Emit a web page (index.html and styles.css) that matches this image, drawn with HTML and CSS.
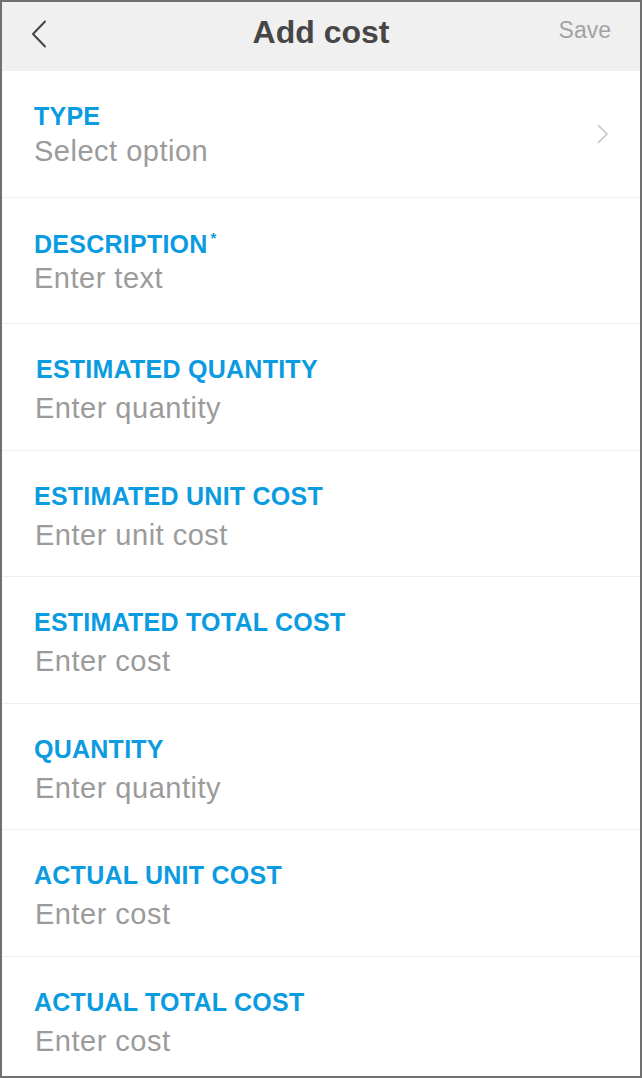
FILE: index.html
```html
<!DOCTYPE html>
<html lang="en">
<head>
<meta charset="utf-8">
<title>Add cost</title>
<link rel="stylesheet" href="styles.css">
</head>
<body>
<div class="screen">
  <header class="topbar">
    <div class="topbar-left">
      <svg class="back-icon" width="16" height="28" viewBox="0 0 16 28" aria-hidden="true">
        <polyline points="14,1.5 2,14 14,26.5" fill="none" stroke="#444" stroke-width="2" stroke-linecap="round" stroke-linejoin="round"/>
      </svg>
    </div>
    <h1 class="topbar-title">Add cost</h1>
    <div class="topbar-right"><span class="save">Save</span></div>
  </header>

  <div class="form">
    <div class="field field--select">
      <div class="field-body">
        <div class="field-label">TYPE</div>
        <div class="field-value">Select option</div>
      </div>
      <svg class="chevron" width="12" height="20" viewBox="0 0 12 20" aria-hidden="true">
        <polyline points="1.5,1.5 10,10 1.5,18.5" fill="none" stroke="#c4c4c4" stroke-width="1.6" stroke-linecap="round" stroke-linejoin="round"/>
      </svg>
    </div>
    <div class="field field--desc">
      <div class="field-body">
        <div class="field-label">DESCRIPTION<span class="required">*</span></div>
        <div class="field-value">Enter text</div>
      </div>
    </div>
    <div class="field field--wide">
      <div class="field-body">
        <div class="field-label field-label--inset">ESTIMATED QUANTITY</div>
        <div class="field-value">Enter quantity</div>
      </div>
    </div>
    <div class="field field--wide">
      <div class="field-body">
        <div class="field-label">ESTIMATED UNIT COST</div>
        <div class="field-value">Enter unit cost</div>
      </div>
    </div>
    <div class="field field--wide">
      <div class="field-body">
        <div class="field-label">ESTIMATED TOTAL COST</div>
        <div class="field-value">Enter cost</div>
      </div>
    </div>
    <div class="field field--wide">
      <div class="field-body">
        <div class="field-label">QUANTITY</div>
        <div class="field-value">Enter quantity</div>
      </div>
    </div>
    <div class="field field--wide">
      <div class="field-body">
        <div class="field-label">ACTUAL UNIT COST</div>
        <div class="field-value">Enter cost</div>
      </div>
    </div>
    <div class="field field--wide field--last">
      <div class="field-body">
        <div class="field-label">ACTUAL TOTAL COST</div>
        <div class="field-value">Enter cost</div>
      </div>
    </div>
  </div>
</div>
</body>
</html>
```

FILE: styles.css
```css
* {
  box-sizing: border-box;
}

html, body {
  margin: 0;
  padding: 0;
  background: #ffffff;
}

body {
  font-family: "Liberation Sans", Arial, Helvetica, sans-serif;
}

.screen {
  width: 642px;
  height: 1078px;
  border: 2px solid #707070;
  background: #ffffff;
  overflow: hidden;
  display: flex;
  flex-direction: column;
}

.topbar {
  height: 69px;
  flex: none;
  background: #f0f0f0;
  display: grid;
  grid-template-columns: 1fr auto 1fr;
  align-items: start;
}

.topbar-left {
  padding-left: 29px;
  padding-top: 18px;
}

.back-icon {
  display: block;
}

.topbar-title {
  margin: 0;
  padding-top: 11px;
  font-size: 32px;
  line-height: 38px;
  font-weight: 700;
  color: #464646;
}

.topbar-right {
  display: flex;
  justify-content: flex-end;
  padding-right: 29px;
  padding-top: 14px;
}

.save {
  font-size: 23px;
  line-height: 28px;
  color: #a3a3a3;
}

.form {
  display: flex;
  flex-direction: column;
}

.field {
  height: 126.5px;
  flex: none;
  border-bottom: 1px solid #efefef;
  display: flex;
  align-items: center;
  padding-left: 32px;
  padding-right: 31px;
}

.field--last {
  border-bottom: none;
}

.field-body {
  flex: 1;
  align-self: flex-start;
  padding-top: 30px;
}

.field-label {
  font-size: 25px;
  line-height: 30px;
  font-weight: 700;
  letter-spacing: 0.25px;
  color: #0a9be0;
  white-space: nowrap;
}

.field-label--inset {
  padding-left: 2px;
}

.required {
  display: inline-block;
  vertical-align: top;
  margin-left: 3px;
  font-size: 15px;
  line-height: 18px;
  font-weight: 700;
}

.field-value {
  margin-top: 3px;
  font-size: 29px;
  line-height: 34px;
  letter-spacing: 0.5px;
  color: #9b9b9b;
  white-space: nowrap;
}

.field--desc .field-body {
  padding-top: 31px;
}

.field--desc .field-value {
  margin-top: 2px;
}

.field--wide .field-value {
  margin-top: 7px;
  padding-left: 1px;
}

.chevron {
  flex: none;
  display: block;
}
```
